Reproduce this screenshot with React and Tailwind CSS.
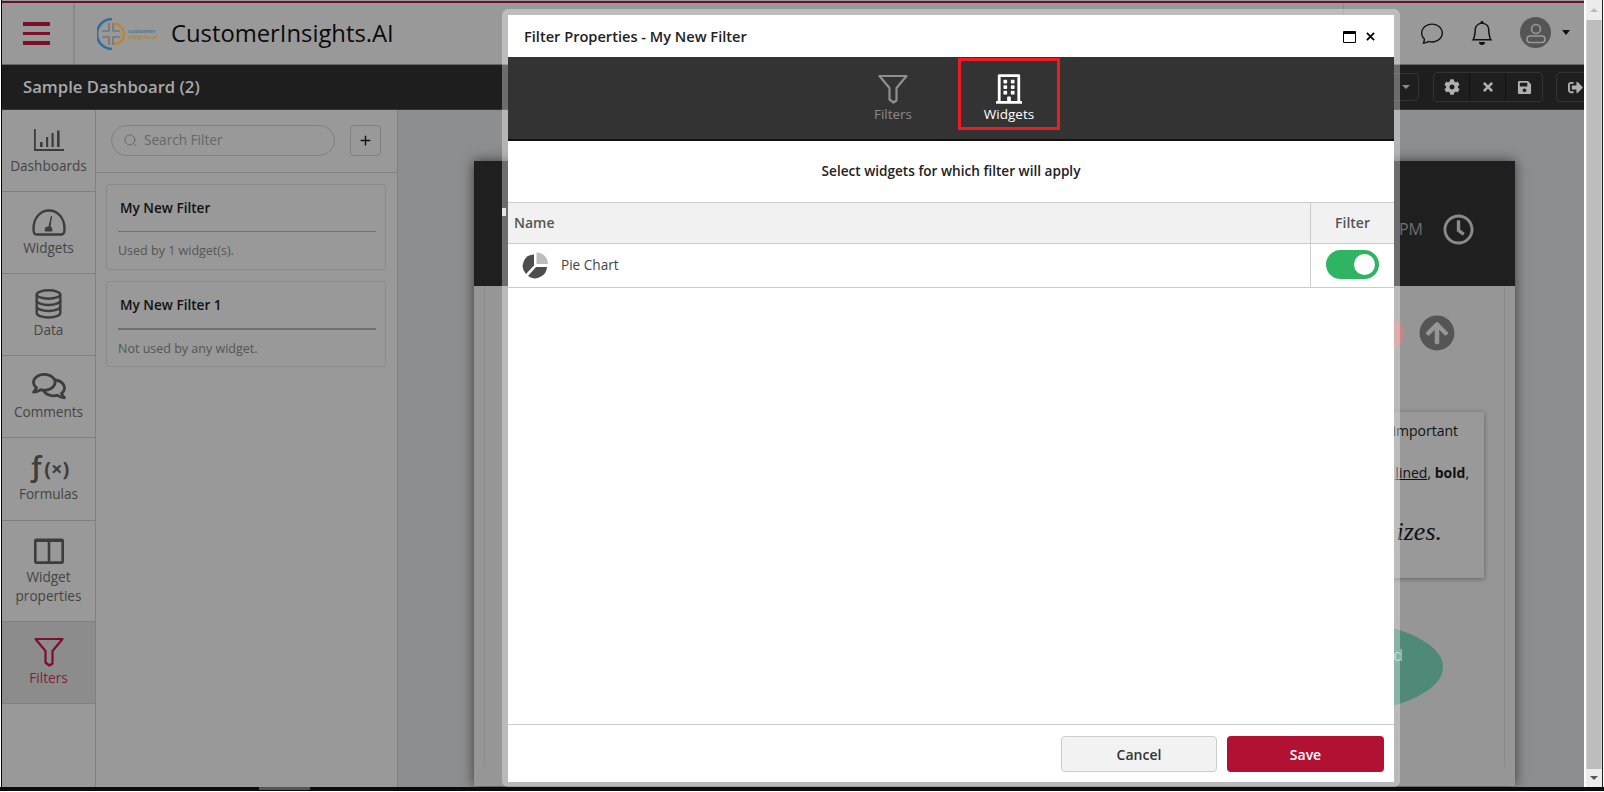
import React from "react";
import { FaRegBuilding, FaCog, FaTimes, FaSave, FaSignOutAlt, FaRegClock, FaArrowCircleUp, FaRegComments } from "react-icons/fa";
import { BsChat, BsBell } from "react-icons/bs";
import { Search, Plus } from "lucide-react";

const Funnel = ({ className, color }) => (
  <svg viewBox="0 0 30 30" className={className} fill="none" stroke={color} strokeWidth="2.2" strokeLinejoin="round">
    <path d="M1.5 2 H28.5 L18.5 14 V26.5 L15.5 28.5 L11.5 25.5 V14 Z" />
  </svg>
);

const DashIcon = () => (
  <svg viewBox="0 0 30 22" className="w-[30px] h-[22px]" fill="#3d3d3d">
    <path d="M0 0h1.8v20H30v2H0z" />
    <rect x="6" y="13" width="2.6" height="5" />
    <rect x="12" y="8" width="2.2" height="10" />
    <rect x="17.5" y="4" width="2.2" height="14" />
    <rect x="23" y="1.5" width="2.6" height="16.5" />
  </svg>
);

const GaugeIcon = () => (
  <svg viewBox="0 0 34 27" className="w-[34px] h-[27px]" fill="none" stroke="#3d3d3d" strokeWidth="2.4">
    <path d="M4.5 25.5 C2.5 25.5 1.5 24 1.5 20 C1.5 8 9 1.5 17 1.5 C25 1.5 32.5 8 32.5 20 C32.5 24 31.5 25.5 29.5 25.5 Z" />
    <path d="M19.5 7 L16.8 18 L13.8 18.5 L13 22 H20 L19.4 18.5 L18 18 Z" fill="#3d3d3d" strokeWidth="1" />
  </svg>
);

const DataIcon = () => (
  <svg viewBox="0 0 27 30" className="w-[27px] h-[30px]" fill="none" stroke="#3d3d3d" strokeWidth="2.4">
    <ellipse cx="13.5" cy="5.5" rx="11.8" ry="4.2" />
    <path d="M1.7 5.5 V24 C1.7 26.5 7 28.5 13.5 28.5 C20 28.5 25.3 26.5 25.3 24 V5.5" />
    <path d="M1.7 11.5 C1.7 14 7 16 13.5 16 C20 16 25.3 14 25.3 11.5" />
    <path d="M1.7 17.5 C1.7 20 7 22 13.5 22 C20 22 25.3 20 25.3 17.5" />
  </svg>
);

const PanelsIcon = () => (
  <svg viewBox="0 0 30 26" className="w-[30px] h-[26px]" fill="none" stroke="#3d3d3d" strokeWidth="2.6">
    <rect x="1.3" y="1.8" width="27.4" height="22.8" rx="1" />
    <path d="M1.2 2.5 H28.8" strokeWidth="3" />
    <path d="M15 2 V24" />
  </svg>
);

const PieIcon = () => (
  <svg viewBox="0 0 28 27" className="w-[28px] h-[27px]">
    <path d="M15.5 0.5 A11.5 11.5 0 0 1 27 12 H15.5 Z" fill="#bdbdbd" />
    <path d="M13 2.5 V13.5 L5 22 A11.5 11.5 0 0 1 13 2.5 Z" fill="#4d4d4d" />
    <path d="M15 15 H26 A12 12 0 0 1 7 24 Z" fill="#4d4d4d" />
  </svg>
);

const Logo = () => (
  <div className="flex items-center gap-[3px] w-[60px]">
    <svg viewBox="0 0 28 32" className="w-[28px] h-[32px] shrink-0" fill="none">
      <path d="M15 1 A15 15 0 0 0 15 31" stroke="#2f6f9e" strokeWidth="2.6" />
      <path d="M17 6 A10 10 0 0 1 17 26" stroke="#b9873a" strokeWidth="2.6" />
      <path d="M5 13 H12 V5 M5 19 H12 V27 M16 5 V13 H23 M16 27 V19 H23" stroke="#666666" strokeWidth="1.1" />
    </svg>
    <div className="text-[6px] leading-[6px] font-semibold">
      <div className="text-[#3f6f90]">customer</div>
      <div className="text-[#a98646]">insights.ai</div>
    </div>
  </div>
);

const items = [
  { label: "Dashboards", icon: <DashIcon />, h: "h-[82px]" },
  { label: "Widgets", icon: <GaugeIcon />, h: "h-[82px]" },
  { label: "Data", icon: <DataIcon />, h: "h-[82px]" },
  { label: "Comments", icon: <FaRegComments className="w-[34px] h-[30px] text-[#3d3d3d]" />, h: "h-[82px]" },
  {
    label: "Formulas",
    icon: (
      <span className="-mt-[3px] flex items-baseline leading-[28px] text-[#3d3d3d]">
        <span className="text-[29px] font-semibold">ƒ</span>
        <span className="text-[20px] font-bold">(×)</span>
      </span>
    ),
    h: "h-[83px]",
  },
  { label: "Widget properties", icon: <PanelsIcon />, h: "h-[101px]" },
];

const SideItem = ({ label, icon, h, active }) => (
  <div className={`${h} shrink-0 flex flex-col items-center pt-[15px] border-b border-[#808080] ${active ? "bg-[#8c8c8c]" : ""}`}>
    <div className="h-[30px] flex items-center justify-center">{icon}</div>
    <div className={`mt-px w-[90px] text-center text-[13.6px] leading-[19px] ${active ? "text-[#7f2238]" : "text-[#444444]"}`}>{label}</div>
  </div>
);

const FilterCard = ({ title, note, lineClass }) => (
  <div className="h-[86px] rounded-[3px] border border-[#8a8a8a] pl-[11px] pr-[9px] pt-[13px]">
    <div className="pl-[2px] text-[13.6px] leading-[20px] font-semibold text-[#111111]">{title}</div>
    <div className={`mt-[13px] ${lineClass}`} />
    <div className="mt-[10px] text-[12.5px] leading-[18px] text-[#555555]">{note}</div>
  </div>
);

const ToolBtn = ({ children, last }) => (
  <div className={`w-[36px] h-[28px] flex items-center justify-center text-[#b0b0b0] ${last ? "" : "border-r border-[#111111]"}`}>{children}</div>
);

export default function App() {
  return (
    <div className="relative w-[1604px] h-[792px] overflow-hidden bg-white font-['Open_Sans',sans-serif]">
      <div className="flex h-[787px] pl-px">
        <div className="w-[1583px] flex flex-col border-l border-black">
          <div className="h-[3px] pt-px bg-[#999999] shrink-0">
            <div className="h-[2px] bg-[#6e1026]" />
          </div>

          {/* header */}
          <div className="h-[62px] shrink-0 flex bg-[#999999] border-b border-[#666666]">
            <div className="w-[73px] border-r-2 border-[#8a8a8a] flex flex-col items-center justify-center gap-[6px] pr-[2px]">
              <div className="w-[27px] h-[3.5px] bg-[#7d0f2a]" />
              <div className="w-[27px] h-[3.5px] bg-[#7d0f2a]" />
              <div className="w-[27px] h-[3.5px] bg-[#7d0f2a]" />
            </div>
            <div className="ml-[22px] flex items-center"><Logo /></div>
            <div className="ml-[14px] flex items-center pt-px text-[23.8px] font-medium text-[#0a0a0a]">CustomerInsights.AI</div>
            <div className="flex-1" />
            <div className="w-[241px] border-l border-[#8a8a8a] flex items-center pb-[2px] pl-[76px] text-[#111111]">
              <BsChat className="w-[24px] h-[22px]" />
              <BsBell className="ml-[26px] w-[24px] h-[24px]" />
              <div className="ml-[26px] w-[31px] h-[31px] rounded-full bg-[#555555] flex items-center justify-center">
                <svg viewBox="0 0 24 24" className="w-[24px] h-[24px]" fill="none" stroke="#999999" strokeWidth="1.6">
                  <circle cx="12" cy="8" r="4.5" />
                  <rect x="3" y="15" width="18" height="6.5" rx="3" />
                </svg>
              </div>
              <div className="ml-[11px] w-0 h-0 border-x-[4.5px] border-x-transparent border-t-[5px] border-t-[#111111]" />
            </div>
          </div>

          {/* title bar */}
          <div className="h-[45px] shrink-0 bg-[#1e1e1e] border-b border-[#333333] flex items-center overflow-hidden">
            <div className="pl-[21px] text-[16.7px] font-semibold text-[#a9a9a9]">Sample Dashboard (2)</div>
            <div className="flex-1" />
            <div className="-mr-[10px] flex items-center">
              <div className="w-[40px] h-[28px] rounded-[4px] border border-[#333333] flex items-center justify-end pr-[8px]">
                <div className="w-0 h-0 border-x-[4px] border-x-transparent border-t-[4px] border-t-[#8a8a8a]" />
              </div>
              <div className="ml-[14px] flex rounded-[4px] border border-[#333333]">
                <ToolBtn><FaCog className="w-[16px] h-[16px]" /></ToolBtn>
                <ToolBtn><FaTimes className="w-[14px] h-[14px]" /></ToolBtn>
                <ToolBtn last><FaSave className="w-[15px] h-[15px]" /></ToolBtn>
              </div>
              <div className="ml-[13px] rounded-[4px] border border-[#333333]">
                <ToolBtn last><FaSignOutAlt className="w-[15px] h-[15px]" /></ToolBtn>
              </div>
            </div>
          </div>

          {/* body */}
          <div className="flex-1 flex min-h-0 bg-[#8d8e90]">
            <div className="w-[94px] shrink-0 bg-[#999999] border-r border-[#808080]">
              {items.map((it) => <SideItem key={it.label} {...it} />)}
              <SideItem label="Filters" h="h-[82px]" active icon={<Funnel className="w-[30px] h-[30px]" color="#7d0f2a" />} />
            </div>

            <div className="w-[302px] shrink-0 bg-[#999999] border-r border-[#808080]">
              <div className="h-[63px] border-b border-[#808080] flex items-center pl-[15px] pb-[2px]">
                <div className="w-[224px] h-[31px] rounded-full border border-[#808080] flex items-center pl-[11px] text-[#666666]">
                  <Search className="w-[15px] h-[15px]" strokeWidth={1.5} />
                  <span className="ml-[6px] text-[13.6px]">Search Filter</span>
                </div>
                <div className="ml-[15px] w-[31px] h-[31px] rounded-[4px] border border-[#808080] flex items-center justify-center text-[#111111]">
                  <Plus className="w-[15px] h-[15px]" strokeWidth={2.2} />
                </div>
              </div>
              <div className="pl-[10px] pr-[11px] pt-[11px] flex flex-col gap-[11px]">
                <FilterCard title="My New Filter" note="Used by 1 widget(s)." lineClass="h-px bg-[#707070]" />
                <FilterCard title="My New Filter 1" note="Not used by any widget." lineClass="h-[2px] bg-[#707070]" />
              </div>
            </div>

            {/* dashboard canvas */}
            <div className="flex-1 min-w-0 pl-[76px] pt-[51px] overflow-hidden">
              <div className="relative w-[1041px] h-[625px] flex flex-col bg-[#969696] shadow-[0_0_12px_rgba(0,0,0,0.6)]">
                <div className="h-[125px] shrink-0 bg-[#1f1f1f] flex items-center pr-[41px] pt-[11px]">
                  <div className="ml-[28px] -mt-[34px] w-[4px] h-[8px] bg-[#d8d8d8]" />
                  <div className="flex-1" />
                  <div className="text-[16px] text-[#6f6f6f]">2 PM</div>
                  <FaRegClock className="ml-[20px] w-[31px] h-[31px] text-[#8a8a8a]" />
                </div>
                <div className="flex-1 mx-[10px] mb-[20px] border-x border-[#8a8a8a]" />
                {/* widgets placed on the free canvas */}
                <div className="absolute left-[898px] top-[157px] w-[32px] h-[32px] rounded-full bg-[#c98585]" />
                <FaArrowCircleUp className="absolute left-[945px] top-[154px] w-[36px] h-[36px] text-[#555555]" />
                <div className="absolute left-[720px] top-[251px] w-[290px] h-[166px] bg-[#999999] shadow-[0_1px_5px_rgba(0,0,0,0.35)] text-[14px] text-[#111111]">
                  <div className="absolute right-[26px] top-[8px]">important</div>
                  <div className="absolute right-[15px] top-[50px]"><span className="underline">lined</span>, <b>bold</b>,</div>
                  <div className="absolute right-[42px] top-[103px] font-['Liberation_Serif',serif] italic text-[26px] leading-[34px]">izes.</div>
                </div>
                <div className="absolute left-[740px] top-[459px] w-[229px] h-[94px] rounded-[50%] bg-[#4e8979] flex items-center justify-end pr-[40px] pb-[24px] text-[16px] text-[#a8c8bf]">d</div>
              </div>
            </div>
          </div>
        </div>

        {/* page scrollbar */}
        <div className="ml-[2px] w-[17px] flex flex-col bg-[#d2d2d2] border-r border-[#222222]">
          <div className="h-[20px] bg-[#ececec] flex items-center justify-center">
            <div className="w-0 h-0 border-x-[4px] border-x-transparent border-b-[4px] border-b-[#bdbdbd]" />
          </div>
          <div className="flex-1 mx-px bg-[#bdbdbd]" />
          <div className="h-[18px] bg-[#ececec] flex items-center justify-center">
            <div className="w-0 h-0 border-x-[4px] border-x-transparent border-t-[4px] border-t-[#555555]" />
          </div>
        </div>
      </div>

      {/* bottom edge */}
      <div className="h-[4px] bg-[#0a0a0a] flex">
        <div className="ml-[259px] w-[51px] h-[3px] bg-[#555555]" />
      </div>

      {/* modal */}
      <div className="absolute left-[502px] top-[9px] w-[898px] h-[778px] rounded-[6px] bg-white/35 pt-[6px] px-[6px] pb-[5px]">
        <div className="h-full flex flex-col bg-white">
          <div className="h-[42px] shrink-0 flex items-center pl-[16px] pr-[19px] pt-px">
            <div className="text-[14.6px] font-semibold text-[#222222]">Filter Properties - My New Filter</div>
            <div className="flex-1" />
            <div className="w-[13px] h-[12px] border border-black border-t-[3px] rounded-[1px]" />
            <svg viewBox="0 0 10 10" className="ml-[10px] w-[9px] h-[9px]" stroke="#000000" strokeWidth="2">
              <path d="M1 1 L9 9 M9 1 L1 9" />
            </svg>
          </div>

          <div className="h-[84px] shrink-0 bg-[#333333] border-b-2 border-[#111111] flex justify-center">
            <div className="w-[116px] flex flex-col items-center pt-[17px]">
              <Funnel className="w-[30px] h-[30px]" color="#8f8f8f" />
              <div className="mt-px text-[13.5px] leading-[19px] font-medium text-[#8a8a8a]">Filters</div>
            </div>
            <div className="w-[116px] flex justify-center pt-[1px]">
              <div className="w-[102px] h-[72px] border-[3px] border-[#ed1c24] flex flex-col items-center pt-[13px]">
                <FaRegBuilding className="w-[26px] h-[30px] text-white" />
                <div className="mt-px text-[13.5px] leading-[19px] font-medium text-white">Widgets</div>
              </div>
            </div>
          </div>

          <div className="h-[61px] shrink-0 flex items-center justify-center text-[13.6px] font-semibold text-[#222222]">Select widgets for which filter will apply</div>

          <div className="h-[42px] shrink-0 flex bg-[#f1f1f1] border-y border-[#cccccc] text-[14px] font-semibold text-[#555555]">
            <div className="flex-1 flex items-center pl-[6px] pb-px">Name</div>
            <div className="w-[84px] border-l border-[#cccccc] flex items-center justify-center pb-px">Filter</div>
          </div>
          <div className="h-[44px] shrink-0 flex border-b border-[#cccccc]">
            <div className="flex-1 flex items-center pl-[13px]">
              <PieIcon />
              <span className="ml-[12px] text-[13.6px] text-[#444444]">Pie Chart</span>
            </div>
            <div className="w-[84px] border-l border-[#cccccc] flex items-center justify-center pb-[3px]">
              <div className="w-[53px] h-[29px] rounded-full bg-[#2fb463] flex items-center justify-end pr-[4px]">
                <div className="w-[21px] h-[21px] rounded-full bg-white" />
              </div>
            </div>
          </div>
          <div className="flex-1" />
          <div className="h-[58px] shrink-0 border-t border-[#cccccc] flex items-start justify-end pt-[11px] pr-[10px] gap-[10px]">
            <button className="w-[156px] h-[36px] rounded-[4px] bg-[#f2f2f2] border border-[#cccccc] text-[14px] font-semibold text-[#333333]">Cancel</button>
            <button className="w-[157px] h-[36px] rounded-[4px] bg-[#b31133] text-[14px] font-semibold text-white">Save</button>
          </div>
        </div>
      </div>
    </div>
  );
}
